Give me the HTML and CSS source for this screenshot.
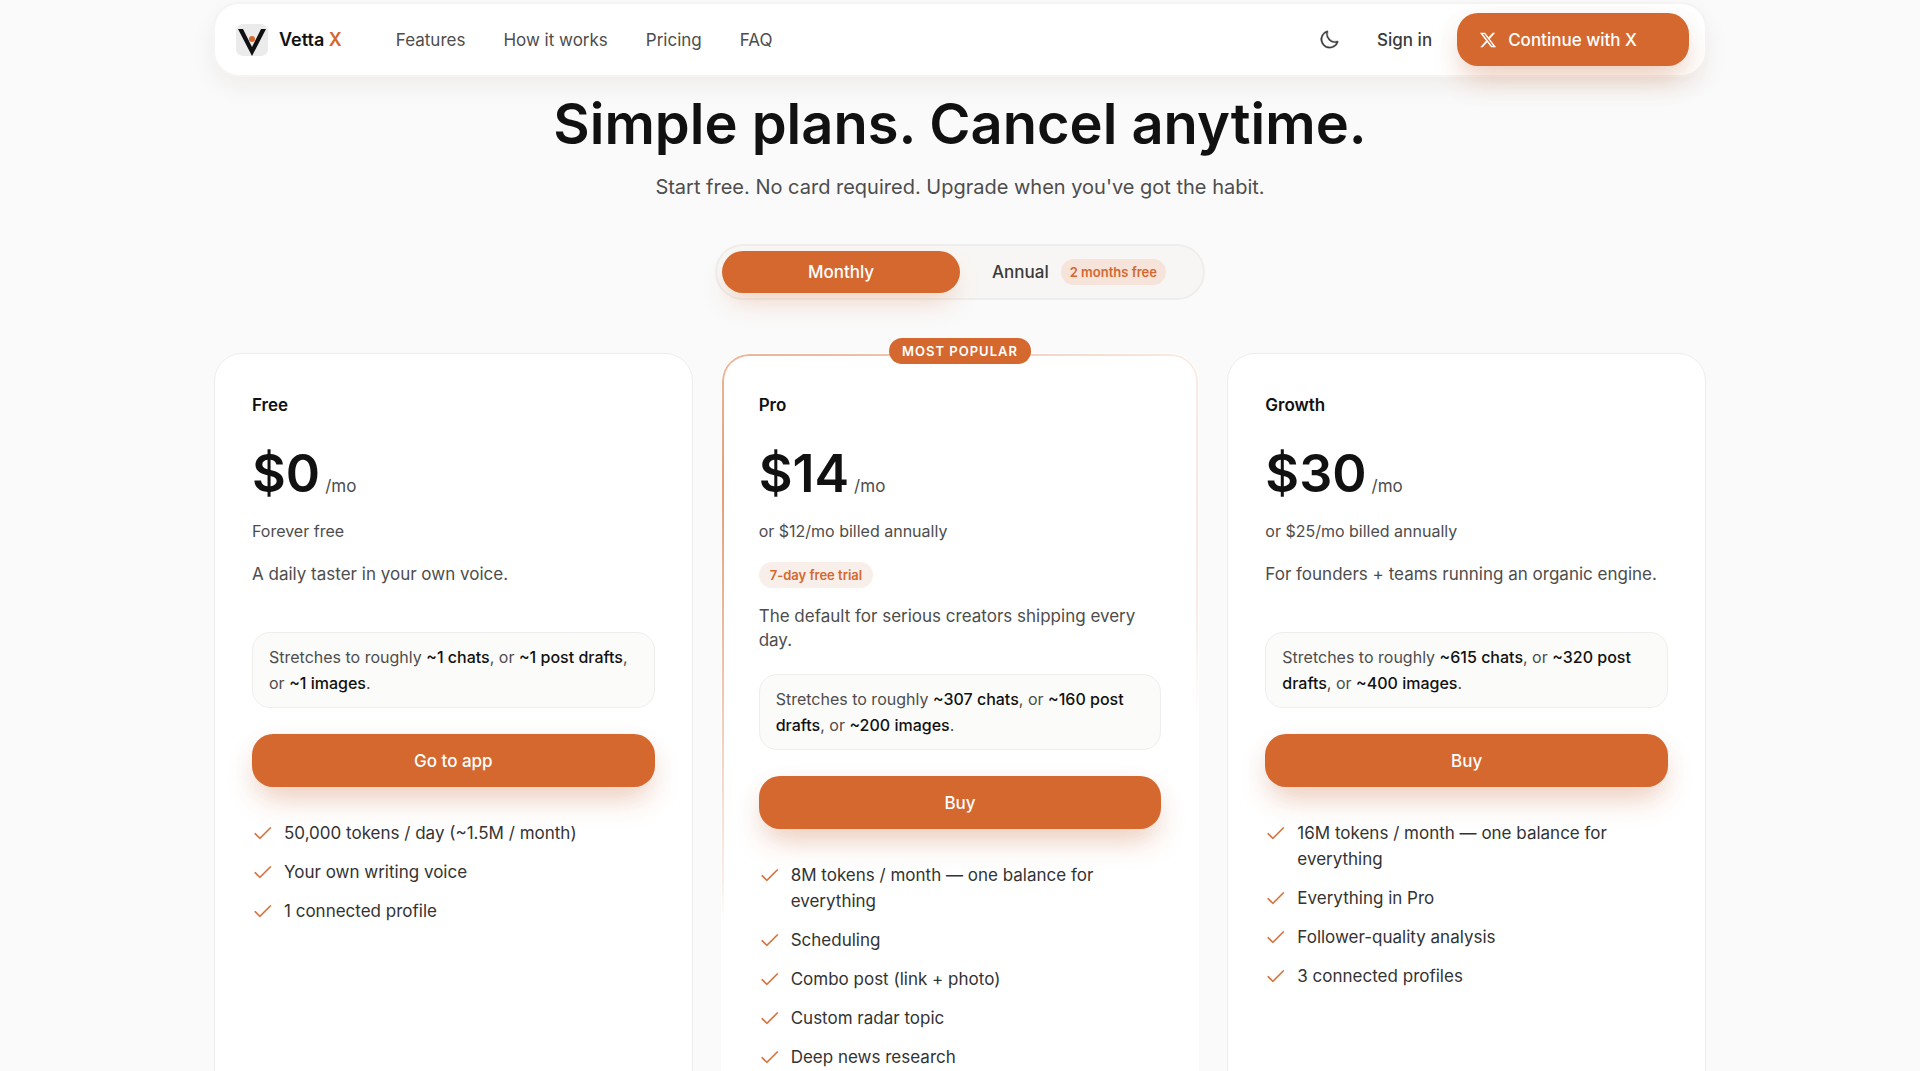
FILE: index.html
```html
<!DOCTYPE html>
<html lang="en">
<head>
  <meta charset="UTF-8">
  <meta name="viewport" content="width=device-width, initial-scale=1.0">
  <title>Vetta X - Pricing</title>
  <link rel="stylesheet" href="styles.css">
</head>
<body>
  <!-- shared icons -->
  <svg class="icon-defs" aria-hidden="true">
    <symbol id="icon-check" viewBox="0 0 256 256">
      <path d="M229.66,77.66l-128,128a8,8,0,0,1-11.32,0l-56-56a8,8,0,0,1,11.32-11.32L96,188.69,218.34,66.34a8,8,0,0,1,11.32,11.32Z"/>
    </symbol>
  </svg>

  <header class="navbar">
    <a href="#" class="brand">
      <svg class="brand-logo" viewBox="0 0 32 32" aria-hidden="true">
        <rect width="32" height="32" rx="7" fill="#ebebeb"/>
        <path d="M2 5h5l9 18 9-18h5L16 32z" fill="#111"/>
        <circle cx="16" cy="15" r="3" fill="#d4682f"/>
      </svg>
      <span>Vetta <span class="brand-x">X</span></span>
    </a>
    <nav class="nav-links">
      <a href="#features">Features</a>
      <a href="#how">How it works</a>
      <a href="#pricing">Pricing</a>
      <a href="#faq">FAQ</a>
    </nav>
    <div class="nav-actions">
      <button class="theme-button" aria-label="Toggle theme">
        <svg viewBox="0 0 256 256" aria-hidden="true">
          <path d="M233.54,142.23a8,8,0,0,0-8-2,88.08,88.08,0,0,1-109.8-109.8,8,8,0,0,0-10-10,104.84,104.84,0,0,0-52.91,37A104,104,0,0,0,136,224a103.09,103.09,0,0,0,62.52-20.88,104.84,104.84,0,0,0,37-52.91A8,8,0,0,0,233.54,142.23ZM188.9,190.34A88,88,0,0,1,65.66,67.11a89,89,0,0,1,31.4-26A106,106,0,0,0,96,56,104.11,104.11,0,0,0,200,160a106,106,0,0,0,14.92-1.06A89,89,0,0,1,188.9,190.34Z"/>
        </svg>
      </button>
      <a href="#signin" class="sign-in">Sign in</a>
      <button class="button continue-button">
        <svg viewBox="0 0 24 24" aria-hidden="true">
          <path d="M18.244 2.25h3.308l-7.227 8.26 8.502 11.24H16.17l-5.214-6.817L4.99 21.75H1.68l7.73-8.835L1.254 2.25H8.08l4.713 6.231zm-1.161 17.52h1.833L7.084 4.126H5.117z"/>
        </svg>
        Continue with X
      </button>
    </div>
  </header>

  <main class="pricing" id="pricing">
    <h1>Simple plans. Cancel anytime.</h1>
    <p class="subtitle">Start free. No card required. Upgrade when you've got the habit.</p>

    <div class="billing-toggle">
      <button class="toggle-option active" aria-pressed="true">Monthly</button>
      <button class="toggle-option" aria-pressed="false">Annual <span class="tag saving">2 months free</span></button>
    </div>

    <div class="plans">
      <section class="plan">
        <h2>Free</h2>
        <p class="price"><span class="amount">$0</span> <span class="period">/mo</span></p>
        <p class="billing-note">Forever free</p>
        <p class="description">A daily taster in your own voice.</p>
        <p class="usage">Stretches to roughly <strong>~1 chats</strong>, or <strong>~1 post drafts</strong>, or <strong>~1 images</strong>.</p>
        <button class="button">Go to app</button>
        <ul class="features">
          <li><svg><use href="#icon-check"/></svg>50,000 tokens / day (~1.5M / month)</li>
          <li><svg><use href="#icon-check"/></svg>Your own writing voice</li>
          <li><svg><use href="#icon-check"/></svg>1 connected profile</li>
        </ul>
      </section>

      <section class="plan popular">
        <span class="popular-badge">Most popular</span>
        <h2>Pro</h2>
        <p class="price"><span class="amount">$14</span> <span class="period">/mo</span></p>
        <p class="billing-note">or $12/mo billed annually</p>
        <span class="tag trial">7-day free trial</span>
        <p class="description">The default for serious creators shipping every day.</p>
        <p class="usage">Stretches to roughly <strong>~307 chats</strong>, or <strong>~160 post drafts</strong>, or <strong>~200 images</strong>.</p>
        <button class="button">Buy</button>
        <ul class="features">
          <li><svg><use href="#icon-check"/></svg>8M tokens / month — one balance for everything</li>
          <li><svg><use href="#icon-check"/></svg>Scheduling</li>
          <li><svg><use href="#icon-check"/></svg>Combo post (link + photo)</li>
          <li><svg><use href="#icon-check"/></svg>Custom radar topic</li>
          <li><svg><use href="#icon-check"/></svg>Deep news research</li>
        </ul>
      </section>

      <section class="plan">
        <h2>Growth</h2>
        <p class="price"><span class="amount">$30</span> <span class="period">/mo</span></p>
        <p class="billing-note">or $25/mo billed annually</p>
        <p class="description">For founders + teams running an organic engine.</p>
        <p class="usage">Stretches to roughly <strong>~615 chats</strong>, or <strong>~320 post drafts</strong>, or <strong>~400 images</strong>.</p>
        <button class="button">Buy</button>
        <ul class="features">
          <li><svg><use href="#icon-check"/></svg>16M tokens / month — one balance for everything</li>
          <li><svg><use href="#icon-check"/></svg>Everything in Pro</li>
          <li><svg><use href="#icon-check"/></svg>Follower-quality analysis</li>
          <li><svg><use href="#icon-check"/></svg>3 connected profiles</li>
        </ul>
      </section>
    </div>
  </main>
</body>
</html>
```
FILE: styles.css
```css
* {
  box-sizing: border-box;
}

body {
  margin: 0;
  padding: 1px 24px 0;
  background-color: #fafafa;
  color: #111;
  font-family: Inter, "Liberation Sans", sans-serif;
  font-size: 17px;
  line-height: 26px;
}

h1, h2, p, ul {
  margin: 0;
  padding: 0;
}

a {
  color: inherit;
  text-decoration: none;
}

button {
  border: 0;
  padding: 0;
  background: none;
  color: inherit;
  font: inherit;
  cursor: pointer;
}

.icon-defs {
  display: none;
}

/* navbar */
.navbar {
  position: sticky;
  top: 1px;
  z-index: 10;
  display: flex;
  align-items: center;
  max-width: 1494px;
  margin: 0 auto;
  padding: 9px 16px 9px 21px;
  border: 2px solid #f6f4f3;
  border-radius: 26px;
  background-color: #fff;
  background-clip: padding-box;
  box-shadow: 0 10px 24px rgba(60, 30, 15, 0.06);
}

.brand {
  display: flex;
  align-items: center;
  gap: 11px;
  font-size: 18px;
  font-weight: 600;
}

.brand-logo {
  width: 32px;
  height: 32px;
}

.brand-x {
  color: #d4682f;
}

.nav-links {
  display: flex;
  gap: 38px;
  margin-left: 54px;
  color: #4d4d4d;
}

.nav-actions {
  display: flex;
  align-items: center;
  margin-left: auto;
}

.theme-button {
  display: flex;
  margin-right: 37px;
}

.theme-button svg {
  width: 22px;
  height: 22px;
  fill: #3a3a3a;
  stroke: #3a3a3a;
  stroke-width: 4;
}

.sign-in {
  margin-right: 25px;
  color: #3a3a3a;
  font-weight: 500;
}

.button {
  display: flex;
  align-items: center;
  justify-content: center;
  height: 53px;
  border-radius: 21px;
  background-color: #d4682f;
  box-shadow: 0 16px 30px -6px rgba(212, 104, 47, 0.32), 0 6px 28px rgba(60, 30, 15, 0.04);
  color: #fff;
  font-weight: 500;
}

.continue-button {
  gap: 11px;
  padding: 0 52px 0 22px;
}

.continue-button svg {
  width: 18px;
  height: 18px;
  fill: #fff;
}

/* pricing header */
.pricing {
  display: flex;
  flex-direction: column;
  align-items: center;
  max-width: 1492px;
  margin: 0 auto;
  padding: 16px 0 60px;
}

h1 {
  font-size: 56px;
  font-weight: 600;
  line-height: 64px;
  text-align: center;
}

.subtitle {
  margin-top: 16px;
  color: #4d4d4d;
  font-size: 20px;
  line-height: 30px;
  text-align: center;
}

.billing-toggle {
  display: grid;
  grid-template-columns: 1fr 1fr;
  width: 490px;
  max-width: 100%;
  margin-top: 42px;
  padding: 5px;
  border: 2px solid #efeeed;
  border-radius: 28px;
  background-color: #f8f6f4;
}

.toggle-option {
  display: flex;
  align-items: center;
  justify-content: center;
  gap: 12px;
  height: 42px;
  border-radius: 21px;
  color: #3a3a3a;
  font-weight: 500;
}

.toggle-option.active {
  background-color: #d4682f;
  box-shadow: 0 14px 26px -6px rgba(212, 104, 47, 0.26);
  color: #fff;
}

.tag {
  border-radius: 13px;
  color: #d4682f;
  font-size: 13px;
  font-weight: 600;
  line-height: 26px;
}

.saving {
  padding: 0 9px;
  background-color: #f6e3da;
}

/* plans */
.plans {
  display: grid;
  grid-template-columns: repeat(3, 1fr);
  gap: 28px;
  width: 100%;
  margin-top: 53px;
}

.plan {
  position: relative;
  display: flex;
  flex-direction: column;
  padding: 38px 37px 48px;
  border: 1px solid #efedec;
  border-radius: 28px;
  background-color: #fff;
}

.popular {
  border-color: #fff;
}

/* accent outline that fades away from the left edge */
.popular::before {
  content: "";
  position: absolute;
  inset: 0;
  padding: 2px;
  border-radius: 27px;
  background: radial-gradient(560px 440px at 0 130px, rgba(212, 104, 47, 0.65), rgba(212, 104, 47, 0.12) 90%, rgba(212, 104, 47, 0));
  mask: linear-gradient(#000 0 0) content-box exclude, linear-gradient(#000 0 0);
  pointer-events: none;
}

.popular-badge {
  position: absolute;
  top: -16px;
  left: 50%;
  transform: translateX(-50%);
  padding: 0 13px;
  border-radius: 13px;
  background-color: #d4682f;
  color: #fff;
  font-size: 13px;
  font-weight: 600;
  letter-spacing: 1px;
  line-height: 26px;
  text-transform: uppercase;
  white-space: nowrap;
}

h2 {
  font-size: 17px;
  font-weight: 600;
  line-height: 26px;
}

.price {
  display: flex;
  align-items: baseline;
  gap: 5px;
  margin-top: 29px;
}

.amount {
  font-size: 52px;
  font-weight: 600;
  line-height: 54px;
}

.period {
  color: #4d4d4d;
}

.billing-note {
  margin-top: 18px;
  color: #4d4d4d;
  font-size: 16px;
  line-height: 24px;
}

.trial {
  align-self: flex-start;
  margin-top: 19px;
  padding: 0 11px;
  background-color: #f8efea;
}

.description {
  min-height: 48px;
  margin-top: 19px;
  color: #4d4d4d;
  line-height: 24px;
}

.trial + .description {
  margin-top: 16px;
}

.usage {
  margin-top: 22px;
  padding: 11px 16px;
  border: 1px solid #f0eeed;
  border-radius: 18px;
  background-color: #fbfbfa;
  color: #4d4d4d;
  font-size: 16px;
}

.usage strong {
  color: #111;
  font-weight: 500;
}

.plan .button {
  margin-top: 26px;
}

.features {
  display: flex;
  flex-direction: column;
  gap: 13px;
  margin-top: 33px;
  color: #333;
  list-style: none;
}

.features li {
  display: flex;
  gap: 11px;
}

.features svg {
  flex: none;
  width: 21px;
  height: 21px;
  margin-top: 2px;
  fill: #d4682f;
  stroke: #d4682f;
  stroke-width: 4;
}

@media (max-width: 1000px) {
  .nav-links {
    display: none;
  }

  .plans {
    grid-template-columns: 1fr;
  }
}
```
